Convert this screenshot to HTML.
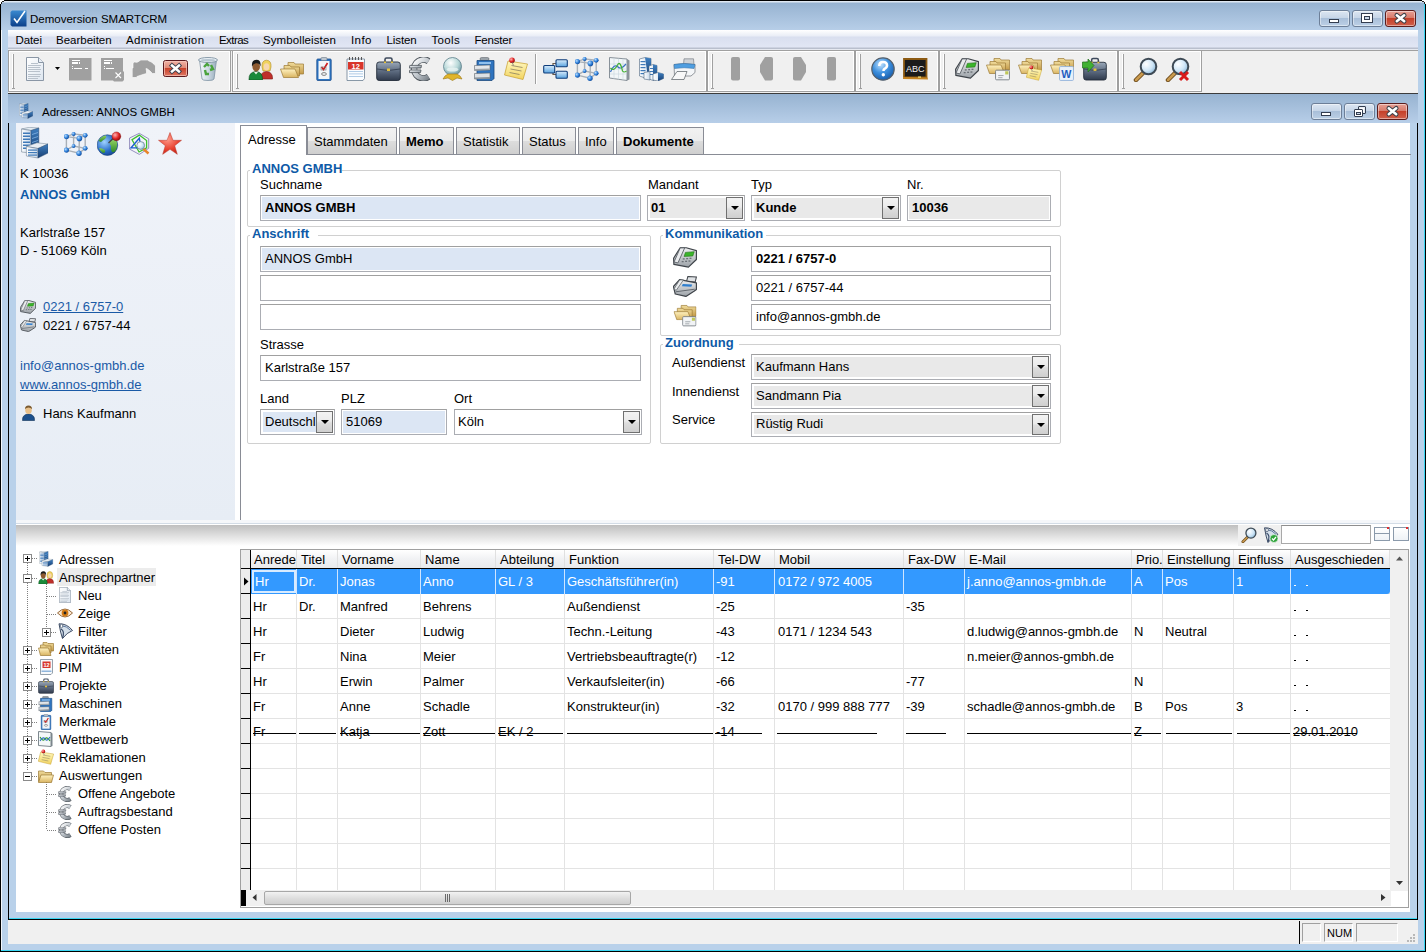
<!DOCTYPE html>
<html><head><meta charset="utf-8"><style>
html,body{margin:0;padding:0;}
body{width:1426px;height:952px;overflow:hidden;position:relative;background:#b9d1ea;font-family:"Liberation Sans",sans-serif;font-size:13px;line-height:15px;color:#000;}
.a{position:absolute;}
.t{white-space:pre;}
.gb{position:absolute;border:1px solid #d0d0d0;border-radius:2px;}
.inp{position:absolute;box-sizing:border-box;border:1px solid #abadb3;border-top-color:#a0a0a0;}
.tab{position:absolute;box-sizing:border-box;border:1px solid #898c95;border-bottom:none;background:linear-gradient(#f2f2f2 0%,#ebebeb 50%,#dddddd 50%,#cfcfcf 100%);}
.ddb{position:absolute;box-sizing:border-box;border:1px solid #707070;background:linear-gradient(#f3f3f3,#ebebeb 45%,#dddddd 55%,#cfcfcf);}
.ddb:after{content:"";position:absolute;left:4px;top:8px;border-left:4px solid transparent;border-right:4px solid transparent;border-top:4px solid #000;}
</style></head><body>
<svg width="0" height="0" style="position:absolute"><defs><linearGradient id="gDoc" x1="0" y1="0" x2="1" y2="1"><stop offset="0" stop-color="#ffffff"/><stop offset="1" stop-color="#dde6f0"/></linearGradient><linearGradient id="gRed" x1="0" y1="0" x2="0" y2="1"><stop offset="0" stop-color="#f2b5a8"/><stop offset="0.45" stop-color="#e08a78"/><stop offset="0.5" stop-color="#c9432c"/><stop offset="1" stop-color="#e07a66"/></linearGradient><linearGradient id="gBin" x1="0" y1="0" x2="1" y2="0"><stop offset="0" stop-color="#f4f8fb"/><stop offset="0.5" stop-color="#cfdbe4"/><stop offset="1" stop-color="#9aaebd"/></linearGradient><linearGradient id="gFold" x1="0" y1="0" x2="0" y2="1"><stop offset="0" stop-color="#fff2c0"/><stop offset="1" stop-color="#d9b461"/></linearGradient><linearGradient id="gFoldB" x1="0" y1="0" x2="0" y2="1"><stop offset="0" stop-color="#f0dc9c"/><stop offset="1" stop-color="#c49a48"/></linearGradient><linearGradient id="gBlueBox" x1="0" y1="0" x2="0" y2="1"><stop offset="0" stop-color="#d9ecfb"/><stop offset="1" stop-color="#5aa4e0"/></linearGradient><linearGradient id="gBrief" x1="0" y1="0" x2="0" y2="1"><stop offset="0" stop-color="#9aa8b8"/><stop offset="0.5" stop-color="#5d6b80"/><stop offset="1" stop-color="#2f3a4c"/></linearGradient><linearGradient id="gSilver" x1="0" y1="0" x2="1" y2="1"><stop offset="0" stop-color="#ffffff"/><stop offset="0.5" stop-color="#c6ccd2"/><stop offset="1" stop-color="#7e868e"/></linearGradient><radialGradient id="gBall" cx="0.4" cy="0.3" r="0.7"><stop offset="0" stop-color="#ffffff"/><stop offset="0.6" stop-color="#b8d8d8"/><stop offset="1" stop-color="#6f9aa5"/></radialGradient><radialGradient id="gHelp" cx="0.4" cy="0.3" r="0.75"><stop offset="0" stop-color="#bfe2ff"/><stop offset="0.5" stop-color="#3d8fdd"/><stop offset="1" stop-color="#1559a8"/></radialGradient><radialGradient id="gGlobe" cx="0.35" cy="0.35" r="0.75"><stop offset="0" stop-color="#9fd2ff"/><stop offset="0.6" stop-color="#2a6fc9"/><stop offset="1" stop-color="#123f8a"/></radialGradient><radialGradient id="gNode" cx="0.35" cy="0.35" r="0.7"><stop offset="0" stop-color="#b5dcff"/><stop offset="0.6" stop-color="#2f7fd8"/><stop offset="1" stop-color="#0f4a9a"/></radialGradient><radialGradient id="gStar" cx="0.4" cy="0.3" r="0.8"><stop offset="0" stop-color="#ff9a8a"/><stop offset="0.6" stop-color="#e8412f"/><stop offset="1" stop-color="#b81f12"/></radialGradient><radialGradient id="gPin" cx="0.35" cy="0.35" r="0.7"><stop offset="0" stop-color="#ffb0b0"/><stop offset="0.6" stop-color="#e02525"/><stop offset="1" stop-color="#8d0d0d"/></radialGradient><linearGradient id="gNote" x1="0" y1="0" x2="0" y2="1"><stop offset="0" stop-color="#fff8c0"/><stop offset="1" stop-color="#f2d460"/></linearGradient><linearGradient id="gBldg" x1="0" y1="0" x2="1" y2="0"><stop offset="0" stop-color="#f2f7fc"/><stop offset="0.5" stop-color="#b8cde0"/><stop offset="1" stop-color="#4f7fae"/></linearGradient><linearGradient id="gTab" x1="0" y1="0" x2="0" y2="1"><stop offset="0" stop-color="#f2f2f2"/><stop offset="0.5" stop-color="#ebebeb"/><stop offset="0.5" stop-color="#dddddd"/><stop offset="1" stop-color="#cfcfcf"/></linearGradient><radialGradient id="gMag" cx="0.35" cy="0.35" r="0.7"><stop offset="0" stop-color="#ffffff"/><stop offset="0.6" stop-color="#cfe6f7"/><stop offset="1" stop-color="#8fb9d8"/></radialGradient><linearGradient id="gPhone" x1="0" y1="0" x2="0" y2="1"><stop offset="0" stop-color="#e6e8ea"/><stop offset="1" stop-color="#8a9098"/></linearGradient><linearGradient id="gSideB" x1="0" y1="0" x2="0" y2="1"><stop offset="0" stop-color="#3f7fc0"/><stop offset="1" stop-color="#173f73"/></linearGradient><linearGradient id="gFrontB" x1="0" y1="0" x2="1" y2="0"><stop offset="0" stop-color="#ffffff"/><stop offset="1" stop-color="#c9d9ea"/></linearGradient><linearGradient id="gPhoneD" x1="0" y1="0" x2="0" y2="1"><stop offset="0" stop-color="#d5d9dd"/><stop offset="1" stop-color="#6c737a"/></linearGradient><linearGradient id="gSilver" x1="0" y1="0" x2="1" y2="1"><stop offset="0" stop-color="#f4f6f8"/><stop offset="0.45" stop-color="#b9c0c7"/><stop offset="1" stop-color="#5f676f"/></linearGradient><radialGradient id="gGlobe" cx="0.4" cy="0.4" r="0.7"><stop offset="0" stop-color="#b8e0ff"/><stop offset="0.45" stop-color="#3d8be0"/><stop offset="1" stop-color="#0f3f8a"/></radialGradient><linearGradient id="gLand" x1="0" y1="0" x2="0" y2="1"><stop offset="0" stop-color="#8fd060"/><stop offset="1" stop-color="#2f8a2a"/></linearGradient><linearGradient id="gGrayBody" x1="0" y1="0" x2="0" y2="1"><stop offset="0" stop-color="#f0f1f2"/><stop offset="1" stop-color="#9ba1a7"/></linearGradient><linearGradient id="gEuro" x1="0" y1="0" x2="1" y2="1"><stop offset="0" stop-color="#ffffff"/><stop offset="0.5" stop-color="#c3c9cf"/><stop offset="1" stop-color="#7d858c"/></linearGradient><symbol id="doc" viewBox="0 0 18 24"><path d="M0.5 0.5H12.5L17.5 5.5V23.5H0.5Z" fill="url(#gDoc)" stroke="#8a96a5"/><path d="M12.5 0.5V5.5H17.5" fill="#e8eef5" stroke="#8a96a5"/><g fill="#b9c2cc"><rect x="5" y="6" width="7" height="1"/><rect x="2" y="8" width="13" height="1"/><rect x="2" y="10" width="12" height="1"/><rect x="2" y="12" width="13" height="1"/><rect x="2" y="14" width="12" height="1"/><rect x="2" y="17" width="13" height="1"/><rect x="2" y="19" width="12" height="1"/><rect x="2" y="21" width="10" height="1"/></g></symbol><symbol id="gray1" viewBox="0 0 23 23"><rect x="0" y="0" width="22.5" height="22.5" fill="#a0a0a0"/><g fill="#fff"><rect x="3" y="2" width="8" height="1"/><rect x="3" y="4" width="6" height="2"/><rect x="10" y="4" width="1" height="2"/><rect x="3" y="8" width="1" height="1"/><rect x="5" y="10" width="8" height="1"/><rect x="3" y="10" width="1" height="1"/><rect x="16" y="10" width="3" height="1"/></g></symbol><symbol id="gray2" viewBox="0 0 23 24"><path d="M0 0H22V13L23 14V22L21.5 23.5H13L12 22.5H0Z" fill="#a0a0a0"/><g fill="#fff"><rect x="3" y="2" width="8" height="1"/><rect x="3" y="4" width="6" height="2"/><rect x="10" y="4" width="1" height="2"/><rect x="3" y="8" width="1" height="1"/><rect x="5" y="10" width="8" height="1"/><rect x="3" y="10" width="1" height="1"/></g><path d="M14.5 14.5L20 20M20 14.5L14.5 20" stroke="#fff" stroke-width="1.1"/></symbol><symbol id="undo" viewBox="0 0 24 18"><path d="M0.2 17.5V8H1V3L2.5 2L5 2.3L7.5 1L8.5 0H15.5L17 1L19.5 2L21 3.5L22.5 4.5L23.5 6V13.5H20.5L18 11L15.5 9L14 8.5L14.5 11V13.5L11 14.5L8 15.5L5 16.5L4 17.5Z" fill="#a0a0a0" stroke="#fff" stroke-width=".8" stroke-opacity=".8"/></symbol><symbol id="redx" viewBox="0 0 25 17"><rect x="0.5" y="0.5" width="24" height="16" rx="2" fill="url(#gRed)" stroke="#5a1a1f"/><rect x="1.5" y="1.5" width="22" height="14" rx="1" fill="none" stroke="#f6c9bf" stroke-opacity=".7"/><path d="M9 5.5L16 11.5M16 5.5L9 11.5" stroke="#3f4350" stroke-width="4.4" stroke-linecap="square"/><path d="M9 5.5L16 11.5M16 5.5L9 11.5" stroke="#fff" stroke-width="2.4" stroke-linecap="square"/></symbol><symbol id="trash" viewBox="0 0 20 24"><path d="M1.5 3L4 22Q4.5 23.5 10 23.5Q15.5 23.5 16 22L18.5 3Z" fill="url(#gBin)" stroke="#7f93a3" stroke-width=".8"/><ellipse cx="10" cy="3" rx="9.5" ry="2.5" fill="#e9f0f5" stroke="#7f93a3" stroke-width=".9"/><ellipse cx="10" cy="3.2" rx="7.5" ry="1.3" fill="#b8c7d2"/><path d="M6 10L9 7L11 9M13 8L15 12L12 13M11 17L8 17L7 13" stroke="#4aa33c" stroke-width="2.4" fill="none"/></symbol><symbol id="people" viewBox="0 0 25 22"><path d="M14 9Q13.5 2.5 18.5 2.2Q23.5 2.5 23 9L22 13H15Z" fill="#f0d25c" stroke="#b08a22" stroke-width=".6"/><ellipse cx="18.5" cy="8.8" rx="2.8" ry="3.6" fill="#f6d7b0"/><path d="M12.5 21Q12 14 18.5 13.5Q24.5 14 24.5 20V21Z" fill="#bf2f2a" stroke="#7d1714" stroke-width=".6"/><path d="M1 22Q0.5 14 8 13.5Q15 14 14.5 22Z" fill="#1a8a3a" stroke="#0b4a1c" stroke-width=".6"/><path d="M6 14L8 16.5L10 14Z" fill="#e8f5e8"/><ellipse cx="8.2" cy="8.8" rx="3.8" ry="4.6" fill="#8e5a30"/><path d="M4 8.5Q3.3 1.8 8.5 1.8Q13.2 1.8 12.6 8.5Q11.5 5 8.2 5.2Q5.3 5.5 4 8.5Z" fill="#1a1a1a"/></symbol><symbol id="folders" viewBox="0 0 24 17"><path d="M8 1.5H14L15 3H23.5V13H8Z" fill="url(#gFoldB)" stroke="#9c7a35" stroke-width=".7"/><path d="M4 4.5H10L11 6H19.5V15H4Z" fill="url(#gFoldB)" stroke="#9c7a35" stroke-width=".7"/><path d="M0.5 8H15L18.5 16.5H3.5Z" fill="url(#gFold)" stroke="#9c7a35" stroke-width=".7"/></symbol><symbol id="clip" viewBox="0 0 16 24"><rect x="0.8" y="2" width="14.4" height="21.5" rx="1" fill="#2d76c4" stroke="#1a4f8f" stroke-width=".8"/><rect x="2.5" y="4" width="11" height="18" fill="#f4f6f8"/><rect x="5" y="0.5" width="6" height="3" rx="1" fill="#bcc6d0" stroke="#6d7a87" stroke-width=".6"/><path d="M5.5 10L7.5 12.5L11.5 6" stroke="#d01c1c" stroke-width="1.6" fill="none"/><rect x="5" y="10" width="5" height="3" fill="none" stroke="#777" stroke-width=".6"/><ellipse cx="8" cy="17" rx="2.4" ry="1.4" fill="none" stroke="#666" stroke-width=".8"/></symbol><symbol id="cal" viewBox="0 0 19 24"><path d="M1 2H18.5V21.5L17 23.5H1Z" fill="#fbfdff" stroke="#6c7f92" stroke-width=".8"/><rect x="2" y="5" width="15.5" height="7.5" fill="#d8352a"/><text x="9.7" y="11.6" font-family="Liberation Sans" font-weight="bold" font-size="7.5" fill="#fff" text-anchor="middle">12</text><g fill="#9fc0e0"><rect x="3" y="14" width="14" height=".8"/><rect x="3" y="16.5" width="14" height=".8"/><rect x="3" y="19" width="14" height=".8"/></g><g fill="#555"><rect x="3" y="0" width="1" height="3"/><rect x="6" y="0" width="1" height="3"/><rect x="9" y="0" width="1" height="3"/><rect x="12" y="0" width="1" height="3"/><rect x="15" y="0" width="1" height="3"/></g></symbol><symbol id="brief" viewBox="0 0 25 24"><path d="M9 5V2.5Q9 1 10.5 1H14.5Q16 1 16 2.5V5" stroke="#3e4a5c" stroke-width="1.6" fill="none"/><rect x="0.7" y="5" width="23.6" height="18.5" rx="2.5" fill="url(#gBrief)" stroke="#232c3a" stroke-width=".9"/><path d="M1 12Q12.5 15 24 12" stroke="#2a3444" stroke-width=".7" fill="none"/><rect x="11" y="11.5" width="3" height="2.5" fill="#e7c23a"/><rect x="8" y="4.5" width="2" height="1.6" fill="#e7c23a"/><rect x="15" y="4.5" width="2" height="1.6" fill="#e7c23a"/></symbol><symbol id="euro" viewBox="0 0 22 24"><path d="M19.5 4.2A9.3 9.3 0 1 0 19.5 19.8" fill="none" stroke="#4d545b" stroke-width="6.6"/><path d="M19.5 4.2A9.3 9.3 0 1 0 19.5 19.8" fill="none" stroke="url(#gEuro)" stroke-width="4.8"/><path d="M0.8 8.4H12.5L12 11H0.3Z" fill="url(#gEuro)" stroke="#4d545b" stroke-width=".8"/><path d="M0.8 13H12L11.5 15.6H0.3Z" fill="url(#gEuro)" stroke="#4d545b" stroke-width=".8"/></symbol><symbol id="ball" viewBox="0 0 21 24"><circle cx="10.5" cy="9.5" r="9" fill="url(#gBall)" stroke="#5b7f8a" stroke-width=".8"/><ellipse cx="10.5" cy="12.5" rx="6" ry="2" fill="#e8f4f2" opacity=".8"/><path d="M3 19L6 17H15L18 19L20 22L15 21L10.5 23.5L6 21L1 22Z" fill="#e0b52c" stroke="#9a7615" stroke-width=".6"/></symbol><symbol id="scanner" viewBox="0 0 21 24"><rect x="6" y="0.5" width="9" height="3" rx="1.5" fill="#9aa2a9" stroke="#50575e" stroke-width=".5"/><path d="M3 3.5H20V21.5L18 23.5H3Z" fill="#2f74bf" stroke="#1c4a7d" stroke-width=".8"/><rect x="5" y="5" width="12" height="2" fill="#8fc0ee"/><path d="M0.5 8.5L16 8V13L0.5 13.5Z" fill="#e3e6ea" stroke="#5c636a" stroke-width=".6"/><path d="M0.5 12L16 11.5V13L0.5 13.5Z" fill="#9aa2a9"/><path d="M0.5 16.5L16 16V21.5L0.5 22Z" fill="#dde1e5" stroke="#5c636a" stroke-width=".6"/><path d="M0.5 20.5L16 20V21.5L0.5 22Z" fill="#8a9299"/></symbol><symbol id="note" viewBox="0 0 24 23"><path d="M4 4L23.5 7L19 22.5L0.5 18Z" fill="url(#gNote)" stroke="#c59d2a" stroke-width=".7"/><g stroke="#8a8060" stroke-width=".8"><path d="M7.5 8.5L18.5 10.5"/><path d="M6.5 12L17.5 14"/><path d="M5.5 15.5L15.5 17.5"/></g><circle cx="8" cy="3.2" r="2.8" fill="url(#gPin)"/><path d="M8 5L9.5 8.5" stroke="#777" stroke-width=".8"/></symbol><symbol id="org" viewBox="0 0 25 20"><path d="M13 4.5H10V15.5H13M8 10H10" stroke="#6a5a4a" stroke-width="1.2" fill="none"/><rect x="0.7" y="6.5" width="11" height="7.5" rx="1" fill="url(#gBlueBox)" stroke="#0f3d7a" stroke-width="1.1"/><rect x="13" y="0.7" width="11.3" height="7" rx="1" fill="url(#gBlueBox)" stroke="#0f3d7a" stroke-width="1.1"/><rect x="13" y="12.3" width="11.3" height="7" rx="1" fill="url(#gBlueBox)" stroke="#0f3d7a" stroke-width="1.1"/></symbol><symbol id="cube" viewBox="0 0 25 24"><g stroke="#a9b0b7" stroke-width="1.4" fill="none"><path d="M2.4 4.6L15.4 6.4L21.2 3.3L9.6 1.9Z"/><path d="M2.4 18.1L15 21.2L21.2 16.3L9.6 14Z"/><path d="M2.4 4.6V18.1M15.4 6.4L15 21.2M9.6 1.9V14M21.2 3.3V16.3"/></g><g fill="url(#gNode)"><circle cx="9.6" cy="1.9" r="2"/><circle cx="9.6" cy="14" r="1.9"/><circle cx="21.2" cy="3.3" r="2.4"/><circle cx="21.2" cy="16.3" r="2.4"/><circle cx="2.4" cy="4.6" r="2.6"/><circle cx="2.4" cy="18.1" r="2.6"/><circle cx="15.4" cy="6.4" r="2.8"/><circle cx="15" cy="21.2" r="2.7"/></g></symbol><symbol id="chart" viewBox="0 0 21 24"><path d="M0.5 0.5L18 2V23.5L0.5 21Z" fill="#f2f6f8" stroke="#7c868e" stroke-width=".9"/><path d="M18 2L20.5 3.5V22.5L18 23.5Z" fill="#8b949b"/><g stroke="#c8d6de" stroke-width=".6"><path d="M1 7H18M1 12H18M1 17H18M5 1V22M9.5 1.5V22.5M14 1.5V23"/></g><path d="M1.5 15Q5 6 9 10Q12 13 17 7" stroke="#3c72c0" stroke-width="1.2" fill="none"/><path d="M1.5 11Q5 15 8.5 8Q11 3 13.5 14Q15 16 17.5 14" stroke="#44b035" stroke-width="1.2" fill="none"/></symbol><symbol id="bldg" viewBox="0 0 25 24"><path d="M0.5 2L6 0.5L12 1.5V19L6 21L0.5 19Z" fill="url(#gFrontB)" stroke="#4b6580" stroke-width=".6"/><path d="M6 0.5L12 1.5V19L9 20Z" fill="url(#gSideB)"/><g fill="#3e79b8"><rect x="1.5" y="4" width="5" height="1.2"/><rect x="1.5" y="7" width="5" height="1.2"/><rect x="1.5" y="10" width="5" height="1.2"/><rect x="1.5" y="13" width="5" height="1.2"/><rect x="1.5" y="16" width="5" height="1.2"/></g><path d="M10 9L14 7.5L18 8.5V22L14 23.5L10 22Z" fill="url(#gFrontB)" stroke="#4b6580" stroke-width=".6"/><path d="M14 7.5L18 8.5V22L14 23.5Z" fill="url(#gSideB)"/><g fill="#3e79b8"><rect x="11" y="11" width="3" height="1"/><rect x="11" y="14" width="3" height="1"/><rect x="11" y="17" width="3" height="1"/></g><path d="M5 15.5L11 14.5V23L5 22Z" fill="url(#gFrontB)" stroke="#4b6580" stroke-width=".6"/><path d="M14 17L19 15.5L24.5 17V21.5L19 24L14 23Z" fill="url(#gFrontB)" stroke="#4b6580" stroke-width=".6"/><path d="M19 15.5L24.5 17V21.5L19 24Z" fill="url(#gSideB)"/></symbol><symbol id="printer" viewBox="0 0 25 22"><path d="M13 0.8H22.5L23 7H12.5Z" fill="#cfd3d7" stroke="#6b7178" stroke-width=".6"/><path d="M3 6.5Q13 4.5 24 6.5V14.5L20 18H3.5Z" fill="#f4f6f8" stroke="#6b7178" stroke-width=".7"/><path d="M3 6.5Q13 4.5 24 6.5L23 10.5Q13 9 3.5 10.5Z" fill="#4f9ee0" stroke="#2d6aa5" stroke-width=".5"/><path d="M6 13.5H16L13 21.5H0.5Z" fill="#f8f8f8" stroke="#555b61" stroke-width=".7"/></symbol><symbol id="navbar" viewBox="0 0 9 24"><rect x="0" y="0" width="9" height="23.5" rx="2" fill="#a0a0a0"/></symbol><symbol id="navl" viewBox="0 0 13 24"><path d="M5 0H11Q13 0 13 2V21.5Q13 23.5 11 23.5H5L0 15V8Z" fill="#a0a0a0"/></symbol><symbol id="navr" viewBox="0 0 13 24"><path d="M8 0H2Q0 0 0 2V21.5Q0 23.5 2 23.5H8L13 15V8Z" fill="#a0a0a0"/></symbol><symbol id="help" viewBox="0 0 24 24"><circle cx="12" cy="12" r="11.2" fill="url(#gHelp)" stroke="#56606b" stroke-width="1.2"/><path d="M8.3 9Q8.3 5 12 5Q16 5 16 8.5Q16 10.5 13.5 11.8Q12.5 12.5 12.5 14" stroke="#fff" stroke-width="2.6" fill="none"/><circle cx="12.3" cy="17.8" r="1.7" fill="#fff"/></symbol><symbol id="abc" viewBox="0 0 25 22"><path d="M1 1H23.5V19.5H1Z" fill="#1b1b1b" stroke="#8c5a12" stroke-width="1.8"/><path d="M0 19L24.5 19.5L25 21.5L0 21Z" fill="#c48424"/><text x="12.3" y="13.5" font-family="Liberation Sans" font-size="9" fill="#f4f4f4" text-anchor="middle">ABC</text><rect x="15" y="18.5" width="3" height="1.2" fill="#f3e67a"/></symbol><symbol id="phone" viewBox="0 0 16 14"><path d="M0.4 7.5L4.8 0.5H8.8L15.6 2.4V8.3L10.3 13.4L0.6 11.6Z" fill="url(#gGrayBody)" stroke="#3f444a" stroke-width=".8" stroke-linejoin="round"/><path d="M4.8 0.6H7.8L3.3 10.6L0.7 10Z" fill="#e9ebed" stroke="#5a6066" stroke-width=".6"/><path d="M8.3 3.6L14.2 3.1L13.2 6L7.4 6.3Z" fill="#3ab52a" stroke="#25701a" stroke-width=".4"/><g fill="#6a7076"><rect x="6.5" y="7.5" width="1.3" height=".9"/><rect x="8.8" y="7.3" width="1.3" height=".9"/><rect x="11" y="7.1" width="1.3" height=".9"/><rect x="5.8" y="9.3" width="1.3" height=".9"/><rect x="8.1" y="9.1" width="1.3" height=".9"/><rect x="10.3" y="8.9" width="1.3" height=".9"/></g></symbol><symbol id="fax" viewBox="0 0 16 14"><path d="M9.9 0.4L15.6 0.7L14.8 4L9 3.6Z" fill="#dfe2e5" stroke="#3f444a" stroke-width=".7"/><path d="M0.3 7L4.4 2.4L15.6 4.6V9L14 10.2L8.6 13.6L1.5 12Z" fill="url(#gGrayBody)" stroke="#3f444a" stroke-width=".8" stroke-linejoin="round"/><path d="M4.4 2.6H7L2.2 9.5L0.6 8.8Z" fill="#eceef0" stroke="#5a6066" stroke-width=".5"/><path d="M6.5 5.3L12.8 5.6L12.2 7.1L5.9 6.8Z" fill="#2f7fcf"/><path d="M2 10.5L14.5 8.8" stroke="#5a6066" stroke-width=".6"/></symbol><symbol id="mail" viewBox="0 0 14 10"><rect x="0.5" y="0.5" width="13" height="9" rx="1" fill="#f1f3f5" stroke="#70787f" stroke-width=".8"/><rect x="9.5" y="1.5" width="3" height="3" fill="#bfc85a"/><g stroke="#8a9096" stroke-width=".7"><path d="M3 5.5H8M3 7.5H7"/></g></symbol><symbol id="foldmail" viewBox="0 0 24 24"><use href="#folders" x="0" y="0" width="24" height="17"/><use href="#mail" x="9" y="12" width="15" height="12"/></symbol><symbol id="foldnote" viewBox="0 0 24 24"><use href="#folders" x="0" y="0" width="24" height="17"/><use href="#note" x="8" y="8" width="16" height="16"/></symbol><symbol id="word" viewBox="0 0 14 14"><rect x="0.5" y="0.5" width="13" height="13" rx="1" fill="#e9f1fb" stroke="#8fb0d8" stroke-width=".8"/><text x="6.8" y="11" font-family="Liberation Sans" font-weight="bold" font-size="10" fill="#1e5cc0" text-anchor="middle">W</text></symbol><symbol id="foldword" viewBox="0 0 24 24"><use href="#folders" x="0" y="0" width="24" height="17"/><use href="#word" x="9" y="9" width="15" height="15"/></symbol><symbol id="briefarrow" viewBox="0 0 25 24"><use href="#brief" x="1" y="0" width="24" height="24"/><path d="M0.5 5V11H6V15L12 8.5L6 2V5Z" fill="#41b033" stroke="#1f6e1a" stroke-width=".7"/></symbol><symbol id="mag" viewBox="0 0 25 25"><path d="M3 23L10 16" stroke="#6b4a1c" stroke-width="4.5" stroke-linecap="round"/><path d="M3 23L10 16" stroke="#c99a4e" stroke-width="2.6" stroke-linecap="round"/><circle cx="15.5" cy="9.5" r="7.8" fill="url(#gMag)" stroke="#3e4a55" stroke-width="2"/></symbol><symbol id="magx" viewBox="0 0 25 25"><use href="#mag" x="0" y="0" width="25" height="25"/><path d="M15 15L23 23M23 15L15 23" stroke="#d91a1a" stroke-width="3"/></symbol><symbol id="globe" viewBox="0 0 25 25"><circle cx="10.4" cy="14.1" r="10.3" fill="url(#gGlobe)" stroke="#173f78" stroke-width=".6"/><path d="M13 10Q16 8 19.5 10Q21 14 19 19Q17 22 15 21Q13 18 14 15Q12 13 13 10Z" fill="url(#gLand)"/><path d="M1.5 10Q4 5 9 4.5Q10 6 8 8Q6 9 4 11Z" fill="url(#gLand)"/><path d="M2 17Q5 17 8 19Q9 22 6 22Q3 20 2 17Z" fill="url(#gLand)"/><path d="M11.5 12L16.5 7" stroke="#444" stroke-width="1.3"/><circle cx="19.4" cy="5.3" r="4.4" fill="url(#gPin)" stroke="#8d1010" stroke-width=".4"/></symbol><symbol id="hexs" viewBox="0 0 21 23"><path d="M10.3 1.3L19.7 6.8V16.3L10.3 22.4L0.6 17.1V6Z" fill="#f4f3fb" stroke="#8a84b8" stroke-width=".9"/><path d="M10.3 3.1L17.6 8.6V15.9L10.1 20L3 7.8Z" fill="none" stroke="#3cbf2c" stroke-width="1.3"/><path d="M10.3 6.2L2 15.9H12Z" fill="none" stroke="#1a5fd0" stroke-width="1.4"/><path d="M14.5 17L19.5 21.5" stroke="#e8842a" stroke-width="2.4"/><circle cx="11.7" cy="13.5" r="3.9" fill="url(#gMag)" stroke="#6a7a88" stroke-width=".7"/></symbol><symbol id="star" viewBox="0 0 24 23"><path d="M12 0.5L15 8.3H23.5L16.7 13.7L19.3 22.3L12 17.3L4.7 22.3L7.3 13.7L0.5 8.3H9Z" fill="url(#gStar)" stroke="#b83a2e" stroke-width=".5"/></symbol><symbol id="building" viewBox="0 0 27 32"><path d="M0.6 2L8 0.3L17.8 1L10 3.5Z" fill="#e4ecf3" stroke="#6f8193" stroke-width=".5"/><path d="M0.6 2L10 3.5V26L0.6 25Z" fill="url(#gFrontB)" stroke="#6f8193" stroke-width=".6"/><path d="M10 3.5L17.8 1V22L10 26Z" fill="url(#gSideB)" stroke="#2d4d70" stroke-width=".5"/><g fill="#3e79b8"><path d="M2 5.5H9V7H2Z"/><path d="M2 8.5H9V10H2Z"/><path d="M2 11.5H9V13H2Z"/><path d="M2 14.5H9V16H2Z"/><path d="M2 17.5H9V19H2Z"/><path d="M2 20.5H9V22H2Z"/></g><g fill="#8fc0ee" opacity=".7"><path d="M11 7L17 5V6L11 8Z"/><path d="M11 11L17 9V10L11 12Z"/><path d="M11 15L17 13V14L11 16Z"/></g><path d="M5.4 19.5L16 15.8L27 17L17 21.5Z" fill="#e9eef3" stroke="#6f8193" stroke-width=".5"/><path d="M5.4 19.5L17 21.5V31L5.4 29Z" fill="url(#gFrontB)" stroke="#6f8193" stroke-width=".6"/><path d="M17 21.5L27 17V26L17 31Z" fill="url(#gSideB)" stroke="#2d4d70" stroke-width=".5"/><g fill="#3e79b8"><path d="M7 22.5H16V23.7H7Z"/><path d="M7 25H16V26.2H7Z"/><path d="M7 27.5H16V28.7H7Z"/></g></symbol><symbol id="person" viewBox="0 0 13 16"><path d="M0.5 15.5Q0 9.5 6.5 9Q13 9.5 12.5 15.5Z" fill="#1b4f8c" stroke="#0e2f56" stroke-width=".6"/><ellipse cx="6.5" cy="5" rx="3.3" ry="4" fill="#e8c08a"/><path d="M3 4Q3 0.5 6.5 0.5Q10 0.5 10 4Q8.5 2.5 6.5 2.5Q4.5 2.5 3 4Z" fill="#7a5a30"/></symbol><symbol id="eye" viewBox="0 0 16 12"><path d="M0.5 6Q8 -2 15.5 6Q8 14 0.5 6Z" fill="#fbe8d2" stroke="#8a5a2a" stroke-width=".9"/><circle cx="8" cy="6" r="3.4" fill="#d47a12"/><circle cx="8" cy="6" r="1.4" fill="#222"/></symbol><symbol id="filter" viewBox="0 0 15 16"><path d="M1 0.8Q9 0.5 14.5 7.5Q9 9.5 4.5 15.5Q2.5 10 1 0.8Z" fill="#d6e0ea" stroke="#2a3a55" stroke-width=".9"/><path d="M2.5 2.5Q9 3 12.5 7.3" stroke="#5f7aa0" stroke-width="1" fill="none"/><path d="M3 6Q7 8 4.5 15" stroke="#3a4c6a" stroke-width="1.2" fill="none"/><ellipse cx="3.5" cy="3" rx="1.3" ry="1.8" fill="#fff" stroke="#2a3a55" stroke-width=".6"/></symbol><symbol id="filtercheck" viewBox="0 0 15 16"><use href="#filter" x="0" y="0" width="15" height="16"/><circle cx="10.5" cy="11.5" r="4" fill="#2ea43a" stroke="#fff" stroke-width=".6"/><path d="M8.5 11.5L10 13L12.5 10" stroke="#fff" stroke-width="1.2" fill="none"/></symbol><symbol id="foldopen" viewBox="0 0 16 14"><path d="M0.5 2H5.5L7 3.5H13.5V12.5H0.5Z" fill="url(#gFoldB)" stroke="#9c7a35" stroke-width=".7"/><path d="M3 6H15.5L13.5 13.5H0.5Z" fill="url(#gFold)" stroke="#9c7a35" stroke-width=".7"/></symbol><symbol id="pim" viewBox="0 0 13 16"><path d="M0.5 0.5H12.5V14L11 15.5H0.5Z" fill="#f7f9fb" stroke="#7c8a98" stroke-width=".8"/><rect x="2.5" y="2.5" width="8" height="6.5" fill="#d8352a"/><text x="6.5" y="8" font-family="Liberation Sans" font-weight="bold" font-size="5.5" fill="#fff" text-anchor="middle">12</text><rect x="1.5" y="11.5" width="10" height="1.5" fill="#8fb6dd"/></symbol><symbol id="wett" viewBox="0 0 15 16"><path d="M0.5 0.5L13 1.5V15.5L0.5 14.5Z" fill="#f4f8f8" stroke="#6f7a82" stroke-width=".9"/><path d="M13 1.5L14.5 2.5V15L13 15.5Z" fill="#7b858c"/><path d="M2 6Q5 11 7 8Q9 5 12 10" stroke="#2f9a2a" stroke-width="1.1" fill="none"/><path d="M2 10Q5 5 7 8Q9 11 12 6" stroke="#2f6fc0" stroke-width="1.1" fill="none"/></symbol><symbol id="foldersS" viewBox="0 0 16 14"><path d="M5 0.5H9L10 1.5H15.5V9H5Z" fill="url(#gFoldB)" stroke="#9c7a35" stroke-width=".7"/><path d="M2.5 3H6.5L7.5 4H13V11H2.5Z" fill="url(#gFoldB)" stroke="#9c7a35" stroke-width=".7"/><path d="M0.5 6H10.5L13 13.5H2.5Z" fill="url(#gFold)" stroke="#9c7a35" stroke-width=".7"/></symbol></defs></svg>
<div class="a" style="left:0px;top:0px;width:1426px;height:952px;background:#b9d1ea;"></div><div class="a" style="left:0px;top:0px;width:1426px;height:1px;background:#000;"></div><div class="a" style="left:0px;top:0px;width:1px;height:952px;background:#000;"></div><div class="a" style="left:1425px;top:0px;width:1px;height:952px;background:#000;"></div><div class="a" style="left:0px;top:951px;width:1426px;height:1px;background:#000;"></div><div class="a" style="left:1424px;top:1px;width:1px;height:950px;background:#3ad6f2;"></div><div class="a" style="left:1px;top:950px;width:1424px;height:1px;background:#3ad6f2;"></div><div class="a" style="left:1px;top:1px;width:1px;height:949px;background:#f2f6fb;"></div><div class="a" style="left:1px;top:1px;width:1423px;height:29px;background:linear-gradient(#dfe8f2 0px,#dfe8f2 1px,#97b3d1 2px,#b7cee8 29px);"></div><svg class="a" style="left:10px;top:10px" width="17" height="17" viewBox="0 0 17 17"><defs><linearGradient id="tig" x1="0" y1="0" x2="0" y2="1"><stop offset="0" stop-color="#3a8ad0"/><stop offset="1" stop-color="#0b3f8a"/></linearGradient></defs><path d="M2 0.5H16.5V16.5H2L0.5 15V2Z" fill="url(#tig)"/><path d="M4 8.5L7 12.5L15 1" stroke="#fff" stroke-width="1.6" fill="none"/></svg><div class="a t " style="left:30px;top:12px;font-size:11.5px;">Demoversion SMARTCRM</div><div class="a" style="left:1319px;top:10px;width:31px;height:17px;box-sizing:border-box;border:1px solid #6d7f98;border-radius:3px;background:linear-gradient(#dce6f2 0%,#c7d6e8 45%,#a9bfd9 50%,#bcd0e6 100%);box-shadow:inset 0 0 0 1px rgba(255,255,255,.45);"></div><div class="a" style="left:1329px;top:19px;width:10px;height:4px;box-sizing:border-box;border:1px solid #333d4f;background:#fff;"></div><div class="a" style="left:1352px;top:10px;width:31px;height:17px;box-sizing:border-box;border:1px solid #6d7f98;border-radius:3px;background:linear-gradient(#dce6f2 0%,#c7d6e8 45%,#a9bfd9 50%,#bcd0e6 100%);box-shadow:inset 0 0 0 1px rgba(255,255,255,.45);"></div><div class="a" style="left:1361px;top:13px;width:12px;height:10px;box-sizing:border-box;border:1px solid #333d4f;background:#fff;"></div><div class="a" style="left:1364px;top:16px;width:6px;height:4px;box-sizing:border-box;border:1px solid #333d4f;background:#c9d7e8;"></div><div class="a" style="left:1385px;top:10px;width:31px;height:17px;box-sizing:border-box;border:1px solid #5b1d1d;border-radius:3px;background:linear-gradient(#e8a095 0%,#d77b6c 45%,#c5402a 50%,#d0604c 100%);box-shadow:inset 0 0 0 1px rgba(255,255,255,.45);"></div><svg class="a" style="left:1393px;top:12px" width="15" height="13" viewBox="0 0 15 13"><path d="M3.8 3.3L11.2 9.2M11.2 3.3L3.8 9.2" stroke="#3c4048" stroke-width="4.6" stroke-linecap="round"/><path d="M3.8 3.3L11.2 9.2M11.2 3.3L3.8 9.2" stroke="#fff" stroke-width="2.6" stroke-linecap="round"/></svg><div class="a" style="left:8px;top:30px;width:1410px;height:19px;background:linear-gradient(#ffffff 0px,#f4f6fa 3px,#e9edf6 6px,#d9dfef 7px,#e1e6f4 17px,#b9bfcd 18px,#b9bfcd 19px);"></div><div class="a t " style="left:15.5px;top:33px;font-size:11.5px;letter-spacing:-0.1px;">Datei</div><div class="a t " style="left:56px;top:33px;font-size:11.5px;letter-spacing:0px;">Bearbeiten</div><div class="a t " style="left:126px;top:33px;font-size:11.5px;letter-spacing:0.4px;">Administration</div><div class="a t " style="left:219px;top:33px;font-size:11.5px;letter-spacing:-0.55px;">Extras</div><div class="a t " style="left:263px;top:33px;font-size:11.5px;letter-spacing:0.1px;">Symbolleisten</div><div class="a t " style="left:351px;top:33px;font-size:11.5px;letter-spacing:0.4px;">Info</div><div class="a t " style="left:386.5px;top:33px;font-size:11.5px;letter-spacing:-0.1px;">Listen</div><div class="a t " style="left:431.5px;top:33px;font-size:11.5px;letter-spacing:0.35px;">Tools</div><div class="a t " style="left:474.5px;top:33px;font-size:11.5px;letter-spacing:-0.2px;">Fenster</div><div class="a" style="left:8px;top:49px;width:1410px;height:45px;background:#f0f0f0;"></div><div class="a" style="left:8px;top:49px;width:1410px;height:1px;background:#e6e9f0;"></div><div class="a" style="left:8px;top:50px;width:1410px;height:1px;background:#a0a0a0;"></div><div class="a" style="left:8px;top:93px;width:1410px;height:1px;background:#3c3c3c;"></div><div class="a" style="left:8px;top:50px;width:223px;height:42px;box-sizing:border-box;border:1px solid #a0a0a0;box-shadow:inset 1px 1px 0 #fff, inset -1px -1px 0 #fff;"></div><div class="a" style="left:12px;top:54px;width:1px;height:35px;background:#fff;"></div><div class="a" style="left:13px;top:54px;width:1px;height:35px;background:#a0a0a0;"></div><div class="a" style="left:12px;top:88px;width:3px;height:1px;background:#a0a0a0;"></div><div class="a" style="left:232px;top:50px;width:475px;height:42px;box-sizing:border-box;border:1px solid #a0a0a0;box-shadow:inset 1px 1px 0 #fff, inset -1px -1px 0 #fff;"></div><div class="a" style="left:236px;top:54px;width:1px;height:35px;background:#fff;"></div><div class="a" style="left:237px;top:54px;width:1px;height:35px;background:#a0a0a0;"></div><div class="a" style="left:236px;top:88px;width:3px;height:1px;background:#a0a0a0;"></div><div class="a" style="left:707px;top:50px;width:148px;height:42px;box-sizing:border-box;border:1px solid #a0a0a0;box-shadow:inset 1px 1px 0 #fff, inset -1px -1px 0 #fff;"></div><div class="a" style="left:711px;top:54px;width:1px;height:35px;background:#fff;"></div><div class="a" style="left:712px;top:54px;width:1px;height:35px;background:#a0a0a0;"></div><div class="a" style="left:711px;top:88px;width:3px;height:1px;background:#a0a0a0;"></div><div class="a" style="left:855px;top:50px;width:84px;height:42px;box-sizing:border-box;border:1px solid #a0a0a0;box-shadow:inset 1px 1px 0 #fff, inset -1px -1px 0 #fff;"></div><div class="a" style="left:859px;top:54px;width:1px;height:35px;background:#fff;"></div><div class="a" style="left:860px;top:54px;width:1px;height:35px;background:#a0a0a0;"></div><div class="a" style="left:859px;top:88px;width:3px;height:1px;background:#a0a0a0;"></div><div class="a" style="left:939px;top:50px;width:179px;height:42px;box-sizing:border-box;border:1px solid #a0a0a0;box-shadow:inset 1px 1px 0 #fff, inset -1px -1px 0 #fff;"></div><div class="a" style="left:943px;top:54px;width:1px;height:35px;background:#fff;"></div><div class="a" style="left:944px;top:54px;width:1px;height:35px;background:#a0a0a0;"></div><div class="a" style="left:943px;top:88px;width:3px;height:1px;background:#a0a0a0;"></div><div class="a" style="left:1118px;top:50px;width:84px;height:42px;box-sizing:border-box;border:1px solid #a0a0a0;box-shadow:inset 1px 1px 0 #fff, inset -1px -1px 0 #fff;"></div><div class="a" style="left:1122px;top:54px;width:1px;height:35px;background:#fff;"></div><div class="a" style="left:1123px;top:54px;width:1px;height:35px;background:#a0a0a0;"></div><div class="a" style="left:1122px;top:88px;width:3px;height:1px;background:#a0a0a0;"></div><div class="a" style="left:8px;top:94px;width:1410px;height:29px;background:linear-gradient(#97b3d1,#b7cee8);"></div><div class="a t " style="left:42px;top:105px;font-size:11.5px;">Adressen: ANNOS GMBH</div><div class="a" style="left:1311px;top:103px;width:31px;height:17px;box-sizing:border-box;border:1px solid #6d7f98;border-radius:3px;background:linear-gradient(#dce6f2 0%,#c7d6e8 45%,#a9bfd9 50%,#bcd0e6 100%);box-shadow:inset 0 0 0 1px rgba(255,255,255,.45);"></div><div class="a" style="left:1321px;top:112px;width:10px;height:4px;box-sizing:border-box;border:1px solid #333d4f;background:#fff;"></div><div class="a" style="left:1344px;top:103px;width:31px;height:17px;box-sizing:border-box;border:1px solid #6d7f98;border-radius:3px;background:linear-gradient(#dce6f2 0%,#c7d6e8 45%,#a9bfd9 50%,#bcd0e6 100%);box-shadow:inset 0 0 0 1px rgba(255,255,255,.45);"></div><div class="a" style="left:1358px;top:106px;width:8px;height:8px;box-sizing:border-box;border:1px solid #333d4f;border-radius:1px;background:#fff;box-shadow:inset 0 0 0 1px #e8eef5;"></div><div class="a" style="left:1354px;top:109px;width:9px;height:8px;box-sizing:border-box;border:1px solid #333d4f;border-radius:1px;background:#fff;"></div><div class="a" style="left:1356px;top:112px;width:5px;height:3px;box-sizing:border-box;border:1px solid #333d4f;background:#c9d7e8;"></div><div class="a" style="left:1377px;top:103px;width:31px;height:17px;box-sizing:border-box;border:1px solid #5b1d1d;border-radius:3px;background:linear-gradient(#e8a095 0%,#d77b6c 45%,#c5402a 50%,#d0604c 100%);box-shadow:inset 0 0 0 1px rgba(255,255,255,.45);"></div><svg class="a" style="left:1385px;top:105px" width="15" height="13" viewBox="0 0 15 13"><path d="M3.8 3.3L11.2 9.2M11.2 3.3L3.8 9.2" stroke="#3c4048" stroke-width="4.6" stroke-linecap="round"/><path d="M3.8 3.3L11.2 9.2M11.2 3.3L3.8 9.2" stroke="#fff" stroke-width="2.6" stroke-linecap="round"/></svg><div class="a" style="left:8px;top:123px;width:1px;height:797px;background:#000;"></div><div class="a" style="left:1417px;top:123px;width:1px;height:797px;background:#000;"></div><div class="a" style="left:1416px;top:123px;width:1px;height:796px;background:#3ad6f2;"></div><div class="a" style="left:8px;top:919px;width:1410px;height:1px;background:#000;"></div><div class="a" style="left:9px;top:918px;width:1408px;height:1px;background:#3ad6f2;"></div><div class="a" style="left:9px;top:123px;width:1408px;height:795px;background:#b9d1ea;"></div><div class="a" style="left:16px;top:123px;width:1394px;height:789px;background:#fff;"></div><div class="a" style="left:16px;top:123px;width:219px;height:397px;background:linear-gradient(#f0f3f9,#e7edf5);"></div><div class="a t " style="left:20px;top:166px;">K 10036</div><div class="a t " style="left:20px;top:187px;font-weight:bold;color:#0e5aa7;">ANNOS GmbH</div><div class="a t " style="left:20px;top:225px;">Karlstraße 157</div><div class="a t " style="left:20px;top:243px;">D - 51069 Köln</div><div class="a t " style="left:43px;top:299px;color:#1a5aa6;text-decoration:underline;">0221 / 6757-0</div><div class="a t " style="left:43px;top:318px;">0221 / 6757-44</div><div class="a t " style="left:20px;top:358px;color:#1a5aa6;">info@annos-gmbh.de</div><div class="a t " style="left:20px;top:377px;color:#1a5aa6;text-decoration:underline;">www.annos-gmbh.de</div><div class="a t " style="left:43px;top:406px;">Hans Kaufmann</div><div class="a" style="left:240px;top:154px;width:1170px;height:366px;border-top:1px solid #898c95;border-left:1px solid #898c95;"></div><div class="tab" style="left:307px;top:127px;width:90px;height:27px;"></div><div class="a t " style="left:314px;top:134px;">Stammdaten</div><div class="tab" style="left:399px;top:127px;width:55px;height:27px;"></div><div class="a t " style="left:406px;top:134px;font-weight:bold;">Memo</div><div class="tab" style="left:456px;top:127px;width:64px;height:27px;"></div><div class="a t " style="left:463px;top:134px;">Statistik</div><div class="tab" style="left:522px;top:127px;width:54px;height:27px;"></div><div class="a t " style="left:529px;top:134px;">Status</div><div class="tab" style="left:578px;top:127px;width:36px;height:27px;"></div><div class="a t " style="left:585px;top:134px;">Info</div><div class="tab" style="left:616px;top:127px;width:88px;height:27px;"></div><div class="a t " style="left:623px;top:134px;font-weight:bold;">Dokumente</div><div class="a" style="left:240px;top:125px;width:67px;height:30px;box-sizing:border-box;border:1px solid #898c95;border-bottom:none;background:#fff;"></div><div class="a t " style="left:248px;top:132px;">Adresse</div><div class="gb" style="left:247px;top:170px;width:812px;height:55px;"></div><div class="a" style="left:250px;top:162px;width:92px;height:14px;background:#fff;"></div><div class="a t " style="left:252px;top:161px;font-weight:bold;color:#0e5aa7;">ANNOS GMBH</div><div class="gb" style="left:247px;top:235px;width:402px;height:207px;"></div><div class="a" style="left:250px;top:227px;width:68px;height:14px;background:#fff;"></div><div class="a t " style="left:252px;top:226px;font-weight:bold;color:#0e5aa7;">Anschrift</div><div class="gb" style="left:660px;top:235px;width:399px;height:99px;"></div><div class="a" style="left:663px;top:227px;width:103px;height:14px;background:#fff;"></div><div class="a t " style="left:665px;top:226px;font-weight:bold;color:#0e5aa7;">Kommunikation</div><div class="gb" style="left:660px;top:344px;width:399px;height:98px;"></div><div class="a" style="left:663px;top:336px;width:76px;height:14px;background:#fff;"></div><div class="a t " style="left:665px;top:335px;font-weight:bold;color:#0e5aa7;">Zuordnung</div><div class="a t " style="left:260px;top:177px;">Suchname</div><div class="a t " style="left:648px;top:177px;">Mandant</div><div class="a t " style="left:751px;top:177px;">Typ</div><div class="a t " style="left:907px;top:177px;">Nr.</div><div class="inp" style="left:260px;top:195px;width:381px;height:26px;background:#dce6f4;box-shadow:inset 0 0 0 1px #fff;"></div><div class="a t " style="left:265px;top:200px;font-weight:bold;">ANNOS GMBH</div><div class="inp" style="left:647px;top:195px;width:98px;height:26px;background:#e9e9e9;box-shadow:inset 0 0 0 2px #fff;"></div><div class="ddb" style="left:726px;top:197px;width:17px;height:22px;"></div><div class="a t " style="left:651px;top:200px;font-weight:bold;">01</div><div class="inp" style="left:751px;top:195px;width:150px;height:26px;background:#e9e9e9;box-shadow:inset 0 0 0 2px #fff;"></div><div class="ddb" style="left:882px;top:197px;width:17px;height:22px;"></div><div class="a t " style="left:756px;top:200px;font-weight:bold;">Kunde</div><div class="inp" style="left:907px;top:195px;width:144px;height:26px;background:#e9e9e9;box-shadow:inset 0 0 0 1px #fff;"></div><div class="a t " style="left:912px;top:200px;font-weight:bold;">10036</div><div class="inp" style="left:260px;top:246px;width:381px;height:26px;background:#dce6f4;box-shadow:inset 0 0 0 1px #fff;"></div><div class="a t " style="left:265px;top:251px;">ANNOS GmbH</div><div class="inp" style="left:260px;top:275px;width:381px;height:26px;background:#fff;"></div><div class="inp" style="left:260px;top:304px;width:381px;height:26px;background:#fff;"></div><div class="a t " style="left:260px;top:337px;">Strasse</div><div class="inp" style="left:260px;top:355px;width:381px;height:26px;background:#fff;"></div><div class="a t " style="left:265px;top:360px;">Karlstraße 157</div><div class="a t " style="left:260px;top:391px;">Land</div><div class="a t " style="left:341px;top:391px;">PLZ</div><div class="a t " style="left:454px;top:391px;">Ort</div><div class="inp" style="left:260px;top:409px;width:75px;height:26px;background:#dce6f4;box-shadow:inset 0 0 0 2px #fff;"></div><div class="ddb" style="left:316px;top:411px;width:17px;height:22px;"></div><div class="a t " style="left:265px;top:414px;">Deutschl</div><div class="inp" style="left:341px;top:409px;width:106px;height:26px;background:#dce6f4;box-shadow:inset 0 0 0 1px #fff;"></div><div class="a t " style="left:346px;top:414px;">51069</div><div class="inp" style="left:454px;top:409px;width:188px;height:26px;background:#fff;box-shadow:inset 0 0 0 2px #fff;"></div><div class="ddb" style="left:623px;top:411px;width:17px;height:22px;"></div><div class="a t " style="left:458px;top:414px;">Köln</div><div class="inp" style="left:751px;top:246px;width:300px;height:26px;background:#fff;"></div><div class="a t " style="left:756px;top:251px;font-weight:bold;">0221 / 6757-0</div><div class="inp" style="left:751px;top:275px;width:300px;height:26px;background:#fff;"></div><div class="a t " style="left:756px;top:280px;">0221 / 6757-44</div><div class="inp" style="left:751px;top:304px;width:300px;height:26px;background:#fff;"></div><div class="a t " style="left:756px;top:309px;">info@annos-gmbh.de</div><div class="a t " style="left:672px;top:355px;">Außendienst</div><div class="a t " style="left:672px;top:384px;">Innendienst</div><div class="a t " style="left:672px;top:412px;">Service</div><div class="inp" style="left:751px;top:354px;width:300px;height:26px;background:#e9e9e9;box-shadow:inset 0 0 0 2px #fff;"></div><div class="ddb" style="left:1032px;top:356px;width:17px;height:22px;"></div><div class="a t " style="left:756px;top:359px;">Kaufmann Hans</div><div class="inp" style="left:751px;top:383px;width:300px;height:26px;background:#e9e9e9;box-shadow:inset 0 0 0 2px #fff;"></div><div class="ddb" style="left:1032px;top:385px;width:17px;height:22px;"></div><div class="a t " style="left:756px;top:388px;">Sandmann Pia</div><div class="inp" style="left:751px;top:412px;width:300px;height:25px;background:#e9e9e9;box-shadow:inset 0 0 0 2px #fff;"></div><div class="ddb" style="left:1032px;top:414px;width:17px;height:21px;"></div><div class="a t " style="left:756px;top:416px;">Rüstig Rudi</div><div class="a" style="left:16px;top:520px;width:1394px;height:3px;background:#f5f7fa;"></div><div class="a" style="left:16px;top:523px;width:1394px;height:1px;background:#d3dce6;"></div><div class="a" style="left:16px;top:525px;width:1222px;height:21px;background:linear-gradient(#bfbfbf,#ffffff);"></div><div class="a" style="left:240px;top:549px;width:1169px;height:359px;box-sizing:border-box;border:1px solid #a0a0a0;background:#fff;"></div><div class="a" style="left:250px;top:550px;width:1140px;height:18px;background:linear-gradient(#ffffff,#f1f2f4 50%,#e9eaec);"></div><div class="a" style="left:241px;top:550px;width:9px;height:18px;background:#ececec;"></div><div class="a t " style="left:254px;top:552px;">Anrede</div><div class="a" style="left:296px;top:550px;width:1px;height:18px;background:#e0e0e0;"></div><div class="a t " style="left:301px;top:552px;">Titel</div><div class="a" style="left:337px;top:550px;width:1px;height:18px;background:#e0e0e0;"></div><div class="a t " style="left:342px;top:552px;">Vorname</div><div class="a" style="left:420px;top:550px;width:1px;height:18px;background:#e0e0e0;"></div><div class="a t " style="left:425px;top:552px;">Name</div><div class="a" style="left:495px;top:550px;width:1px;height:18px;background:#e0e0e0;"></div><div class="a t " style="left:500px;top:552px;">Abteilung</div><div class="a" style="left:564px;top:550px;width:1px;height:18px;background:#e0e0e0;"></div><div class="a t " style="left:569px;top:552px;">Funktion</div><div class="a" style="left:713px;top:550px;width:1px;height:18px;background:#e0e0e0;"></div><div class="a t " style="left:718px;top:552px;">Tel-DW</div><div class="a" style="left:774px;top:550px;width:1px;height:18px;background:#e0e0e0;"></div><div class="a t " style="left:779px;top:552px;">Mobil</div><div class="a" style="left:903px;top:550px;width:1px;height:18px;background:#e0e0e0;"></div><div class="a t " style="left:908px;top:552px;">Fax-DW</div><div class="a" style="left:964px;top:550px;width:1px;height:18px;background:#e0e0e0;"></div><div class="a t " style="left:969px;top:552px;">E-Mail</div><div class="a" style="left:1131px;top:550px;width:1px;height:18px;background:#e0e0e0;"></div><div class="a t " style="left:1136px;top:552px;">Prio.</div><div class="a" style="left:1162px;top:550px;width:1px;height:18px;background:#e0e0e0;"></div><div class="a t " style="left:1167px;top:552px;">Einstellung</div><div class="a" style="left:1233px;top:550px;width:1px;height:18px;background:#e0e0e0;"></div><div class="a t " style="left:1238px;top:552px;">Einfluss</div><div class="a" style="left:1290px;top:550px;width:1px;height:18px;background:#e0e0e0;"></div><div class="a t " style="left:1295px;top:552px;">Ausgeschieden</div><div class="a" style="left:1389px;top:550px;width:1px;height:18px;background:#e0e0e0;"></div><div class="a" style="left:241px;top:568px;width:1149px;height:1px;background:#000;"></div><div class="a" style="left:250px;top:550px;width:1px;height:340px;background:#000;"></div><div class="a" style="left:241px;top:569px;width:9px;height:24px;background:#ececec;"></div><div class="a" style="left:241px;top:593px;width:9px;height:1px;background:#000;"></div><div class="a" style="left:251px;top:593px;width:1139px;height:1px;background:#e3e3e3;"></div><div class="a" style="left:241px;top:594px;width:9px;height:24px;background:#ececec;"></div><div class="a" style="left:241px;top:618px;width:9px;height:1px;background:#000;"></div><div class="a" style="left:251px;top:618px;width:1139px;height:1px;background:#e3e3e3;"></div><div class="a" style="left:241px;top:619px;width:9px;height:24px;background:#ececec;"></div><div class="a" style="left:241px;top:643px;width:9px;height:1px;background:#000;"></div><div class="a" style="left:251px;top:643px;width:1139px;height:1px;background:#e3e3e3;"></div><div class="a" style="left:241px;top:644px;width:9px;height:24px;background:#ececec;"></div><div class="a" style="left:241px;top:668px;width:9px;height:1px;background:#000;"></div><div class="a" style="left:251px;top:668px;width:1139px;height:1px;background:#e3e3e3;"></div><div class="a" style="left:241px;top:669px;width:9px;height:24px;background:#ececec;"></div><div class="a" style="left:241px;top:693px;width:9px;height:1px;background:#000;"></div><div class="a" style="left:251px;top:693px;width:1139px;height:1px;background:#e3e3e3;"></div><div class="a" style="left:241px;top:694px;width:9px;height:24px;background:#ececec;"></div><div class="a" style="left:241px;top:718px;width:9px;height:1px;background:#000;"></div><div class="a" style="left:251px;top:718px;width:1139px;height:1px;background:#e3e3e3;"></div><div class="a" style="left:241px;top:719px;width:9px;height:24px;background:#ececec;"></div><div class="a" style="left:241px;top:743px;width:9px;height:1px;background:#000;"></div><div class="a" style="left:251px;top:743px;width:1139px;height:1px;background:#e3e3e3;"></div><div class="a" style="left:241px;top:744px;width:9px;height:24px;background:#ececec;"></div><div class="a" style="left:241px;top:768px;width:9px;height:1px;background:#000;"></div><div class="a" style="left:251px;top:768px;width:1139px;height:1px;background:#e3e3e3;"></div><div class="a" style="left:241px;top:769px;width:9px;height:24px;background:#ececec;"></div><div class="a" style="left:241px;top:793px;width:9px;height:1px;background:#000;"></div><div class="a" style="left:251px;top:793px;width:1139px;height:1px;background:#e3e3e3;"></div><div class="a" style="left:241px;top:794px;width:9px;height:24px;background:#ececec;"></div><div class="a" style="left:241px;top:818px;width:9px;height:1px;background:#000;"></div><div class="a" style="left:251px;top:818px;width:1139px;height:1px;background:#e3e3e3;"></div><div class="a" style="left:241px;top:819px;width:9px;height:24px;background:#ececec;"></div><div class="a" style="left:241px;top:843px;width:9px;height:1px;background:#000;"></div><div class="a" style="left:251px;top:843px;width:1139px;height:1px;background:#e3e3e3;"></div><div class="a" style="left:241px;top:844px;width:9px;height:24px;background:#ececec;"></div><div class="a" style="left:241px;top:868px;width:9px;height:1px;background:#000;"></div><div class="a" style="left:251px;top:868px;width:1139px;height:1px;background:#e3e3e3;"></div><div class="a" style="left:241px;top:869px;width:9px;height:24px;background:#ececec;"></div><div class="a" style="left:241px;top:893px;width:9px;height:1px;background:#000;"></div><div class="a" style="left:251px;top:893px;width:1139px;height:1px;background:#e3e3e3;"></div><div class="a" style="left:296px;top:569px;width:1px;height:321px;background:#e3e3e3;"></div><div class="a" style="left:337px;top:569px;width:1px;height:321px;background:#e3e3e3;"></div><div class="a" style="left:420px;top:569px;width:1px;height:321px;background:#e3e3e3;"></div><div class="a" style="left:495px;top:569px;width:1px;height:321px;background:#e3e3e3;"></div><div class="a" style="left:564px;top:569px;width:1px;height:321px;background:#e3e3e3;"></div><div class="a" style="left:713px;top:569px;width:1px;height:321px;background:#e3e3e3;"></div><div class="a" style="left:774px;top:569px;width:1px;height:321px;background:#e3e3e3;"></div><div class="a" style="left:903px;top:569px;width:1px;height:321px;background:#e3e3e3;"></div><div class="a" style="left:964px;top:569px;width:1px;height:321px;background:#e3e3e3;"></div><div class="a" style="left:1131px;top:569px;width:1px;height:321px;background:#e3e3e3;"></div><div class="a" style="left:1162px;top:569px;width:1px;height:321px;background:#e3e3e3;"></div><div class="a" style="left:1233px;top:569px;width:1px;height:321px;background:#e3e3e3;"></div><div class="a" style="left:1290px;top:569px;width:1px;height:321px;background:#e3e3e3;"></div><div class="a" style="left:251px;top:569px;width:1139px;height:25px;background:#3399ff;border-bottom-right-radius:3px;"></div><div class="a" style="left:296px;top:569px;width:1px;height:25px;background:#cfe5ff;"></div><div class="a" style="left:337px;top:569px;width:1px;height:25px;background:#cfe5ff;"></div><div class="a" style="left:420px;top:569px;width:1px;height:25px;background:#cfe5ff;"></div><div class="a" style="left:495px;top:569px;width:1px;height:25px;background:#cfe5ff;"></div><div class="a" style="left:564px;top:569px;width:1px;height:25px;background:#cfe5ff;"></div><div class="a" style="left:713px;top:569px;width:1px;height:25px;background:#cfe5ff;"></div><div class="a" style="left:774px;top:569px;width:1px;height:25px;background:#cfe5ff;"></div><div class="a" style="left:903px;top:569px;width:1px;height:25px;background:#cfe5ff;"></div><div class="a" style="left:964px;top:569px;width:1px;height:25px;background:#cfe5ff;"></div><div class="a" style="left:1131px;top:569px;width:1px;height:25px;background:#cfe5ff;"></div><div class="a" style="left:1162px;top:569px;width:1px;height:25px;background:#cfe5ff;"></div><div class="a" style="left:1233px;top:569px;width:1px;height:25px;background:#cfe5ff;"></div><div class="a" style="left:1290px;top:569px;width:1px;height:25px;background:#cfe5ff;"></div><div class="a" style="left:252px;top:570px;width:44px;height:23px;box-sizing:border-box;border:2px solid #d8ebff;"></div><div class="a t " style="left:255px;top:574px;color:#fff;">Hr</div><div class="a t " style="left:299px;top:574px;color:#fff;">Dr.</div><div class="a t " style="left:340px;top:574px;color:#fff;">Jonas</div><div class="a t " style="left:423px;top:574px;color:#fff;">Anno</div><div class="a t " style="left:498px;top:574px;color:#fff;">GL / 3</div><div class="a t " style="left:567px;top:574px;color:#fff;">Geschäftsführer(in)</div><div class="a t " style="left:716px;top:574px;color:#fff;">-91</div><div class="a t " style="left:778px;top:574px;color:#fff;">0172 / 972 4005</div><div class="a t " style="left:967px;top:574px;color:#fff;">j.anno@annos-gmbh.de</div><div class="a t " style="left:1134px;top:574px;color:#fff;">A</div><div class="a t " style="left:1165px;top:574px;color:#fff;">Pos</div><div class="a t " style="left:1236px;top:574px;color:#fff;">1</div><div class="a t " style="left:253px;top:599px;">Hr</div><div class="a t " style="left:299px;top:599px;">Dr.</div><div class="a t " style="left:340px;top:599px;">Manfred</div><div class="a t " style="left:423px;top:599px;">Behrens</div><div class="a t " style="left:567px;top:599px;">Außendienst</div><div class="a t " style="left:716px;top:599px;">-25</div><div class="a t " style="left:906px;top:599px;">-35</div><div class="a t " style="left:253px;top:624px;">Hr</div><div class="a t " style="left:340px;top:624px;">Dieter</div><div class="a t " style="left:423px;top:624px;">Ludwig</div><div class="a t " style="left:567px;top:624px;">Techn.-Leitung</div><div class="a t " style="left:716px;top:624px;">-43</div><div class="a t " style="left:778px;top:624px;">0171 / 1234 543</div><div class="a t " style="left:967px;top:624px;">d.ludwig@annos-gmbh.de</div><div class="a t " style="left:1134px;top:624px;">N</div><div class="a t " style="left:1165px;top:624px;">Neutral</div><div class="a t " style="left:253px;top:649px;">Fr</div><div class="a t " style="left:340px;top:649px;">Nina</div><div class="a t " style="left:423px;top:649px;">Meier</div><div class="a t " style="left:567px;top:649px;">Vertriebsbeauftragte(r)</div><div class="a t " style="left:716px;top:649px;">-12</div><div class="a t " style="left:967px;top:649px;">n.meier@annos-gmbh.de</div><div class="a t " style="left:253px;top:674px;">Hr</div><div class="a t " style="left:340px;top:674px;">Erwin</div><div class="a t " style="left:423px;top:674px;">Palmer</div><div class="a t " style="left:567px;top:674px;">Verkaufsleiter(in)</div><div class="a t " style="left:716px;top:674px;">-66</div><div class="a t " style="left:906px;top:674px;">-77</div><div class="a t " style="left:1134px;top:674px;">N</div><div class="a t " style="left:253px;top:699px;">Fr</div><div class="a t " style="left:340px;top:699px;">Anne</div><div class="a t " style="left:423px;top:699px;">Schadle</div><div class="a t " style="left:567px;top:699px;">Konstrukteur(in)</div><div class="a t " style="left:716px;top:699px;">-32</div><div class="a t " style="left:778px;top:699px;">0170 / 999 888 777</div><div class="a t " style="left:906px;top:699px;">-39</div><div class="a t " style="left:967px;top:699px;">schadle@annos-gmbh.de</div><div class="a t " style="left:1134px;top:699px;">B</div><div class="a t " style="left:1165px;top:699px;">Pos</div><div class="a t " style="left:1236px;top:699px;">3</div><div class="a t " style="left:253px;top:724px;">Fr</div><div class="a t " style="left:340px;top:724px;">Katja</div><div class="a t " style="left:423px;top:724px;">Zott</div><div class="a t " style="left:498px;top:724px;">EK / 2</div><div class="a t " style="left:716px;top:724px;">-14</div><div class="a t " style="left:1134px;top:724px;">Z</div><div class="a t " style="left:1293px;top:724px;">29.01.2010</div><svg class="a" style="left:244px;top:577px" width="5" height="9"><path d="M0 0.5L4.5 4.5L0 8.5Z" fill="#000"/></svg><div class="a" style="left:1390px;top:550px;width:18px;height:340px;background:#f0f0f0;"></div><div class="a" style="left:241px;top:890px;width:1167px;height:16px;background:#f0f0f0;"></div><div class="a" style="left:241px;top:890px;width:5px;height:16px;background:#000;"></div><div class="a" style="left:264px;top:891px;width:367px;height:14px;box-sizing:border-box;border:1px solid #a7a7a7;border-radius:2px;background:linear-gradient(#f2f2f2,#dedede 50%,#cfcfcf);"></div><div class="a" style="left:57px;top:568px;width:99px;height:18px;background:#ececec;"></div><div class="a t " style="left:59px;top:552px;">Adressen</div><div class="a t " style="left:59px;top:570px;">Ansprechpartner</div><div class="a t " style="left:78px;top:588px;">Neu</div><div class="a t " style="left:78px;top:606px;">Zeige</div><div class="a t " style="left:78px;top:624px;">Filter</div><div class="a t " style="left:59px;top:642px;">Aktivitäten</div><div class="a t " style="left:59px;top:660px;">PIM</div><div class="a t " style="left:59px;top:678px;">Projekte</div><div class="a t " style="left:59px;top:696px;">Maschinen</div><div class="a t " style="left:59px;top:714px;">Merkmale</div><div class="a t " style="left:59px;top:732px;">Wettbewerb</div><div class="a t " style="left:59px;top:750px;">Reklamationen</div><div class="a t " style="left:59px;top:768px;">Auswertungen</div><div class="a t " style="left:78px;top:786px;">Offene Angebote</div><div class="a t " style="left:78px;top:804px;">Auftragsbestand</div><div class="a t " style="left:78px;top:822px;">Offene Posten</div><div class="a" style="left:8px;top:920px;width:1410px;height:24px;background:#f0f0f0;"></div><div class="a" style="left:1299px;top:921px;width:1px;height:23px;background:#000;"></div><div class="a" style="left:1302px;top:923px;width:19px;height:19px;box-sizing:border-box;border:1px solid #a0a0a0;border-right-color:#fff;border-bottom-color:#fff;"></div><div class="a" style="left:1324px;top:923px;width:29px;height:19px;box-sizing:border-box;border:1px solid #a0a0a0;border-right-color:#fff;border-bottom-color:#fff;"></div><div class="a" style="left:1356px;top:923px;width:42px;height:19px;box-sizing:border-box;border:1px solid #a0a0a0;border-right-color:#fff;border-bottom-color:#fff;"></div><div class="a t " style="left:1327px;top:926px;font-size:11px;">NUM</div><div class="a" style="left:253px;top:733px;width:43px;height:1px;background:#000;"></div><div class="a" style="left:299px;top:733px;width:37px;height:1px;background:#000;"></div><div class="a" style="left:340px;top:733px;width:80px;height:1px;background:#000;"></div><div class="a" style="left:423px;top:733px;width:72px;height:1px;background:#000;"></div><div class="a" style="left:498px;top:733px;width:65px;height:1px;background:#000;"></div><div class="a" style="left:567px;top:733px;width:146px;height:1px;background:#000;"></div><div class="a" style="left:715px;top:733px;width:47px;height:1px;background:#000;"></div><div class="a" style="left:777px;top:733px;width:100px;height:1px;background:#000;"></div><div class="a" style="left:906px;top:733px;width:40px;height:1px;background:#000;"></div><div class="a" style="left:967px;top:733px;width:164px;height:1px;background:#000;"></div><div class="a" style="left:1134px;top:733px;width:27px;height:1px;background:#000;"></div><div class="a" style="left:1166px;top:733px;width:66px;height:1px;background:#000;"></div><div class="a" style="left:1237px;top:733px;width:53px;height:1px;background:#000;"></div><div class="a" style="left:1293px;top:733px;width:64px;height:1px;background:#000;"></div><svg class="a" style="left:26px;top:57px;" width="18" height="24" viewBox="0 0 18 24"><use href="#doc"/></svg><svg class="a" style="left:69px;top:58px;" width="23" height="23" viewBox="0 0 23 23"><use href="#gray1"/></svg><svg class="a" style="left:101px;top:58px;" width="23" height="24" viewBox="0 0 23 24"><use href="#gray2"/></svg><svg class="a" style="left:132px;top:60px;" width="24" height="18" viewBox="0 0 24 18"><use href="#undo"/></svg><svg class="a" style="left:163px;top:60px;" width="25" height="17" viewBox="0 0 25 17"><use href="#redx"/></svg><svg class="a" style="left:198px;top:57px;" width="20" height="24" viewBox="0 0 20 24"><use href="#trash"/></svg><svg class="a" style="left:248px;top:58px;" width="25" height="22" viewBox="0 0 25 22"><use href="#people"/></svg><svg class="a" style="left:280px;top:61px;" width="24" height="17" viewBox="0 0 24 17"><use href="#folders"/></svg><svg class="a" style="left:316px;top:57px;" width="16" height="24" viewBox="0 0 16 24"><use href="#clip"/></svg><svg class="a" style="left:346px;top:57px;" width="19" height="24" viewBox="0 0 19 24"><use href="#cal"/></svg><svg class="a" style="left:376px;top:57px;" width="25" height="24" viewBox="0 0 25 24"><use href="#brief"/></svg><svg class="a" style="left:409px;top:57px;" width="22" height="24" viewBox="0 0 22 24"><use href="#euro"/></svg><svg class="a" style="left:442px;top:57px;" width="21" height="24" viewBox="0 0 21 24"><use href="#ball"/></svg><svg class="a" style="left:474px;top:57px;" width="21" height="24" viewBox="0 0 21 24"><use href="#scanner"/></svg><svg class="a" style="left:504px;top:57px;" width="24" height="23" viewBox="0 0 24 23"><use href="#note"/></svg><svg class="a" style="left:543px;top:59px;" width="25" height="20" viewBox="0 0 25 20"><use href="#org"/></svg><svg class="a" style="left:575px;top:57px;" width="25" height="24" viewBox="0 0 25 24"><use href="#cube"/></svg><svg class="a" style="left:609px;top:57px;" width="21" height="24" viewBox="0 0 21 24"><use href="#chart"/></svg><svg class="a" style="left:639px;top:57px;" width="25" height="24" viewBox="0 0 25 24"><use href="#bldg"/></svg><svg class="a" style="left:671px;top:58px;" width="25" height="22" viewBox="0 0 25 22"><use href="#printer"/></svg><svg class="a" style="left:731px;top:57px;" width="9" height="24" viewBox="0 0 9 24"><use href="#navbar"/></svg><svg class="a" style="left:760px;top:57px;" width="13" height="24" viewBox="0 0 13 24"><use href="#navl"/></svg><svg class="a" style="left:793px;top:57px;" width="13" height="24" viewBox="0 0 13 24"><use href="#navr"/></svg><svg class="a" style="left:827px;top:57px;" width="9" height="24" viewBox="0 0 9 24"><use href="#navbar"/></svg><svg class="a" style="left:871px;top:57px;" width="24" height="24" viewBox="0 0 24 24"><use href="#help"/></svg><svg class="a" style="left:903px;top:58px;" width="25" height="22" viewBox="0 0 25 22"><use href="#abc"/></svg><svg class="a" style="left:955px;top:58px;" width="24" height="21" viewBox="0 0 24 21"><use href="#phone"/></svg><svg class="a" style="left:986px;top:57px;" width="24" height="24" viewBox="0 0 24 24"><use href="#foldmail"/></svg><svg class="a" style="left:1018px;top:57px;" width="24" height="24" viewBox="0 0 24 24"><use href="#foldnote"/></svg><svg class="a" style="left:1050px;top:57px;" width="24" height="24" viewBox="0 0 24 24"><use href="#foldword"/></svg><svg class="a" style="left:1082px;top:57px;" width="25" height="24" viewBox="0 0 25 24"><use href="#briefarrow"/></svg><svg class="a" style="left:1133px;top:57px;" width="25" height="25" viewBox="0 0 25 25"><use href="#mag"/></svg><svg class="a" style="left:1165px;top:57px;" width="25" height="25" viewBox="0 0 25 25"><use href="#magx"/></svg><svg class="a" style="left:55px;top:67px" width="5" height="3"><path d="M0 0H5L2.5 3Z" fill="#000"/></svg><div class="a" style="left:535px;top:54px;width:1px;height:30px;background:#a0a0a0;"></div><div class="a" style="left:536px;top:54px;width:1px;height:30px;background:#fff;"></div><svg class="a" style="left:19px;top:103px;" width="14" height="16" viewBox="0 0 14 16"><use href="#building"/></svg><svg class="a" style="left:21px;top:127px;" width="27" height="32" viewBox="0 0 27 32"><use href="#building"/></svg><svg class="a" style="left:64px;top:132px;" width="25" height="24" viewBox="0 0 25 24"><use href="#cube"/></svg><svg class="a" style="left:97px;top:131px;" width="25" height="25" viewBox="0 0 25 25"><use href="#globe"/></svg><svg class="a" style="left:129px;top:132px;" width="21" height="23" viewBox="0 0 21 23"><use href="#hexs"/></svg><svg class="a" style="left:158px;top:132px;" width="24" height="23" viewBox="0 0 24 23"><use href="#star"/></svg><svg class="a" style="left:20px;top:300px;" width="16" height="14" viewBox="0 0 16 14"><use href="#phone"/></svg><svg class="a" style="left:20px;top:318px;" width="16" height="14" viewBox="0 0 16 14"><use href="#fax"/></svg><svg class="a" style="left:22px;top:405px;" width="13" height="16" viewBox="0 0 13 16"><use href="#person"/></svg><svg class="a" style="left:673px;top:247px;" width="24" height="21" viewBox="0 0 24 21"><use href="#phone"/></svg><svg class="a" style="left:673px;top:276px;" width="24" height="21" viewBox="0 0 24 21"><use href="#fax"/></svg><svg class="a" style="left:673px;top:304px;" width="24" height="23" viewBox="0 0 24 23"><use href="#foldmail"/></svg><div class="a" style="left:1238px;top:525px;width:43px;height:21px;background:#f0f0f0;"></div><svg class="a" style="left:1241px;top:527px;" width="16" height="16" viewBox="0 0 16 16"><use href="#mag"/></svg><svg class="a" style="left:1263px;top:527px;" width="16" height="16" viewBox="0 0 16 16"><use href="#filtercheck"/></svg><div class="a" style="left:1281px;top:525px;width:90px;height:19px;box-sizing:border-box;border:1px solid #a9a9a9;border-top-color:#8e8e8e;background:#fff;"></div><div class="a" style="left:1374px;top:527px;width:16px;height:14px;box-sizing:border-box;border:1px solid #8b9aab;background:linear-gradient(#fff,#eef2f6);"></div><div class="a" style="left:1387px;top:527px;width:2px;height:2px;background:#e03030;"></div><div class="a" style="left:1393px;top:527px;width:16px;height:14px;box-sizing:border-box;border:1px solid #8b9aab;background:linear-gradient(#fff,#eef2f6);"></div><div class="a" style="left:1406px;top:527px;width:2px;height:2px;background:#e03030;"></div><div class="a" style="left:1375px;top:533px;width:14px;height:1px;background:#8b9aab;"></div><div class="a" style="left:27px;top:563px;width:1px;height:207px;background:repeating-linear-gradient(#808080 0 1px,transparent 1px 2px);"></div><div class="a" style="left:32px;top:558px;width:6px;height:1px;background:repeating-linear-gradient(90deg,#808080 0 1px,transparent 1px 2px);"></div><div class="a" style="left:23px;top:554px;width:9px;height:9px;box-sizing:border-box;border:1px solid #8a8a8a;background:#fff;"></div><div class="a" style="left:25px;top:558px;width:5px;height:1px;background:#000;"></div><div class="a" style="left:27px;top:556px;width:1px;height:5px;background:#000;"></div><div class="a" style="left:32px;top:578px;width:6px;height:1px;background:repeating-linear-gradient(90deg,#808080 0 1px,transparent 1px 2px);"></div><div class="a" style="left:23px;top:574px;width:9px;height:9px;box-sizing:border-box;border:1px solid #8a8a8a;background:#fff;"></div><div class="a" style="left:25px;top:578px;width:5px;height:1px;background:#000;"></div><div class="a" style="left:32px;top:650px;width:6px;height:1px;background:repeating-linear-gradient(90deg,#808080 0 1px,transparent 1px 2px);"></div><div class="a" style="left:23px;top:646px;width:9px;height:9px;box-sizing:border-box;border:1px solid #8a8a8a;background:#fff;"></div><div class="a" style="left:25px;top:650px;width:5px;height:1px;background:#000;"></div><div class="a" style="left:27px;top:648px;width:1px;height:5px;background:#000;"></div><div class="a" style="left:32px;top:668px;width:6px;height:1px;background:repeating-linear-gradient(90deg,#808080 0 1px,transparent 1px 2px);"></div><div class="a" style="left:23px;top:664px;width:9px;height:9px;box-sizing:border-box;border:1px solid #8a8a8a;background:#fff;"></div><div class="a" style="left:25px;top:668px;width:5px;height:1px;background:#000;"></div><div class="a" style="left:27px;top:666px;width:1px;height:5px;background:#000;"></div><div class="a" style="left:32px;top:686px;width:6px;height:1px;background:repeating-linear-gradient(90deg,#808080 0 1px,transparent 1px 2px);"></div><div class="a" style="left:23px;top:682px;width:9px;height:9px;box-sizing:border-box;border:1px solid #8a8a8a;background:#fff;"></div><div class="a" style="left:25px;top:686px;width:5px;height:1px;background:#000;"></div><div class="a" style="left:27px;top:684px;width:1px;height:5px;background:#000;"></div><div class="a" style="left:32px;top:704px;width:6px;height:1px;background:repeating-linear-gradient(90deg,#808080 0 1px,transparent 1px 2px);"></div><div class="a" style="left:23px;top:700px;width:9px;height:9px;box-sizing:border-box;border:1px solid #8a8a8a;background:#fff;"></div><div class="a" style="left:25px;top:704px;width:5px;height:1px;background:#000;"></div><div class="a" style="left:27px;top:702px;width:1px;height:5px;background:#000;"></div><div class="a" style="left:32px;top:722px;width:6px;height:1px;background:repeating-linear-gradient(90deg,#808080 0 1px,transparent 1px 2px);"></div><div class="a" style="left:23px;top:718px;width:9px;height:9px;box-sizing:border-box;border:1px solid #8a8a8a;background:#fff;"></div><div class="a" style="left:25px;top:722px;width:5px;height:1px;background:#000;"></div><div class="a" style="left:27px;top:720px;width:1px;height:5px;background:#000;"></div><div class="a" style="left:32px;top:740px;width:6px;height:1px;background:repeating-linear-gradient(90deg,#808080 0 1px,transparent 1px 2px);"></div><div class="a" style="left:23px;top:736px;width:9px;height:9px;box-sizing:border-box;border:1px solid #8a8a8a;background:#fff;"></div><div class="a" style="left:25px;top:740px;width:5px;height:1px;background:#000;"></div><div class="a" style="left:27px;top:738px;width:1px;height:5px;background:#000;"></div><div class="a" style="left:32px;top:758px;width:6px;height:1px;background:repeating-linear-gradient(90deg,#808080 0 1px,transparent 1px 2px);"></div><div class="a" style="left:23px;top:754px;width:9px;height:9px;box-sizing:border-box;border:1px solid #8a8a8a;background:#fff;"></div><div class="a" style="left:25px;top:758px;width:5px;height:1px;background:#000;"></div><div class="a" style="left:27px;top:756px;width:1px;height:5px;background:#000;"></div><div class="a" style="left:32px;top:776px;width:6px;height:1px;background:repeating-linear-gradient(90deg,#808080 0 1px,transparent 1px 2px);"></div><div class="a" style="left:23px;top:772px;width:9px;height:9px;box-sizing:border-box;border:1px solid #8a8a8a;background:#fff;"></div><div class="a" style="left:25px;top:776px;width:5px;height:1px;background:#000;"></div><div class="a" style="left:46px;top:584px;width:1px;height:44px;background:repeating-linear-gradient(#808080 0 1px,transparent 1px 2px);"></div><div class="a" style="left:47px;top:596px;width:10px;height:1px;background:repeating-linear-gradient(90deg,#808080 0 1px,transparent 1px 2px);"></div><div class="a" style="left:47px;top:614px;width:10px;height:1px;background:repeating-linear-gradient(90deg,#808080 0 1px,transparent 1px 2px);"></div><div class="a" style="left:42px;top:628px;width:9px;height:9px;box-sizing:border-box;border:1px solid #8a8a8a;background:#fff;"></div><div class="a" style="left:44px;top:632px;width:5px;height:1px;background:#000;"></div><div class="a" style="left:46px;top:630px;width:1px;height:5px;background:#000;"></div><div class="a" style="left:51px;top:632px;width:6px;height:1px;background:repeating-linear-gradient(90deg,#808080 0 1px,transparent 1px 2px);"></div><div class="a" style="left:46px;top:782px;width:1px;height:47px;background:repeating-linear-gradient(#808080 0 1px,transparent 1px 2px);"></div><div class="a" style="left:47px;top:794px;width:10px;height:1px;background:repeating-linear-gradient(90deg,#808080 0 1px,transparent 1px 2px);"></div><div class="a" style="left:47px;top:812px;width:10px;height:1px;background:repeating-linear-gradient(90deg,#808080 0 1px,transparent 1px 2px);"></div><div class="a" style="left:47px;top:830px;width:10px;height:1px;background:repeating-linear-gradient(90deg,#808080 0 1px,transparent 1px 2px);"></div><svg class="a" style="left:38px;top:551px;" width="16" height="16" viewBox="0 0 16 16"><use href="#building"/></svg><svg class="a" style="left:38px;top:570px;" width="16" height="14" viewBox="0 0 16 14"><use href="#people"/></svg><svg class="a" style="left:59px;top:587px;" width="12" height="16" viewBox="0 0 12 16"><use href="#doc"/></svg><svg class="a" style="left:57px;top:607px;" width="16" height="12" viewBox="0 0 16 12"><use href="#eye"/></svg><svg class="a" style="left:58px;top:623px;" width="15" height="16" viewBox="0 0 15 16"><use href="#filter"/></svg><svg class="a" style="left:38px;top:642px;" width="16" height="14" viewBox="0 0 16 14"><use href="#foldersS"/></svg><svg class="a" style="left:40px;top:659px;" width="13" height="16" viewBox="0 0 13 16"><use href="#pim"/></svg><svg class="a" style="left:38px;top:678px;" width="16" height="16" viewBox="0 0 16 16"><use href="#brief"/></svg><svg class="a" style="left:38px;top:696px;" width="15" height="16" viewBox="0 0 15 16"><use href="#scanner"/></svg><svg class="a" style="left:40px;top:714px;" width="12" height="16" viewBox="0 0 12 16"><use href="#clip"/></svg><svg class="a" style="left:38px;top:731px;" width="15" height="16" viewBox="0 0 15 16"><use href="#wett"/></svg><svg class="a" style="left:38px;top:749px;" width="16" height="16" viewBox="0 0 16 16"><use href="#note"/></svg><svg class="a" style="left:38px;top:769px;" width="16" height="14" viewBox="0 0 16 14"><use href="#foldopen"/></svg><svg class="a" style="left:58px;top:786px;" width="14" height="16" viewBox="0 0 14 16"><use href="#euro"/></svg><svg class="a" style="left:58px;top:804px;" width="14" height="16" viewBox="0 0 14 16"><use href="#euro"/></svg><svg class="a" style="left:58px;top:822px;" width="14" height="16" viewBox="0 0 14 16"><use href="#euro"/></svg><div class="a" style="left:1294px;top:585px;width:2px;height:1px;background:#fff;"></div><div class="a" style="left:1306px;top:585px;width:2px;height:1px;background:#fff;"></div><div class="a" style="left:1294px;top:610px;width:2px;height:1px;background:#000;"></div><div class="a" style="left:1306px;top:610px;width:2px;height:1px;background:#000;"></div><div class="a" style="left:1294px;top:635px;width:2px;height:1px;background:#000;"></div><div class="a" style="left:1306px;top:635px;width:2px;height:1px;background:#000;"></div><div class="a" style="left:1294px;top:660px;width:2px;height:1px;background:#000;"></div><div class="a" style="left:1306px;top:660px;width:2px;height:1px;background:#000;"></div><div class="a" style="left:1294px;top:685px;width:2px;height:1px;background:#000;"></div><div class="a" style="left:1306px;top:685px;width:2px;height:1px;background:#000;"></div><div class="a" style="left:1294px;top:710px;width:2px;height:1px;background:#000;"></div><div class="a" style="left:1306px;top:710px;width:2px;height:1px;background:#000;"></div><svg class="a" style="left:1396px;top:556px" width="8" height="5"><path d="M0 4.5L3.5 0.5L7 4.5Z" fill="#555"/></svg><svg class="a" style="left:1396px;top:881px" width="8" height="5"><path d="M0 0L3.5 4L7 0Z" fill="#333"/></svg><svg class="a" style="left:252px;top:894px" width="5" height="8"><path d="M4.5 0L0.5 3.5L4.5 7Z" fill="#333"/></svg><svg class="a" style="left:1381px;top:894px" width="5" height="8"><path d="M0 0L4.5 3.5L0 7Z" fill="#333"/></svg><div class="a" style="left:1391px;top:891px;width:17px;height:15px;background:#fff;"></div><div class="a" style="left:445px;top:894px;width:1px;height:8px;background:#6a6a6a;"></div><div class="a" style="left:447px;top:894px;width:1px;height:8px;background:#6a6a6a;"></div><div class="a" style="left:449px;top:894px;width:1px;height:8px;background:#6a6a6a;"></div><div class="a" style="left:1413px;top:934px;width:2px;height:2px;background:#b8b8b8;"></div><div class="a" style="left:1410px;top:937px;width:2px;height:2px;background:#b8b8b8;"></div><div class="a" style="left:1413px;top:937px;width:2px;height:2px;background:#b8b8b8;"></div><div class="a" style="left:1407px;top:940px;width:2px;height:2px;background:#b8b8b8;"></div><div class="a" style="left:1410px;top:940px;width:2px;height:2px;background:#b8b8b8;"></div><div class="a" style="left:1413px;top:940px;width:2px;height:2px;background:#b8b8b8;"></div><div class="a" style="left:0px;top:0px;width:4px;height:1px;background:#fff;"></div><div class="a" style="left:0px;top:1px;width:2px;height:1px;background:#fff;"></div><div class="a" style="left:0px;top:2px;width:1px;height:1px;background:#fff;"></div><div class="a" style="left:0px;top:3px;width:1px;height:1px;background:#fff;"></div><div class="a" style="left:2px;top:1px;width:2px;height:1px;background:#222;"></div><div class="a" style="left:1px;top:2px;width:1px;height:2px;background:#222;"></div><div class="a" style="left:1422px;top:0px;width:4px;height:1px;background:#fff;"></div><div class="a" style="left:1424px;top:1px;width:2px;height:1px;background:#fff;"></div><div class="a" style="left:1425px;top:2px;width:1px;height:1px;background:#fff;"></div><div class="a" style="left:1425px;top:3px;width:1px;height:1px;background:#fff;"></div><div class="a" style="left:1422px;top:1px;width:2px;height:1px;background:#222;"></div><div class="a" style="left:1424px;top:2px;width:1px;height:2px;background:#222;"></div>
</body></html>
